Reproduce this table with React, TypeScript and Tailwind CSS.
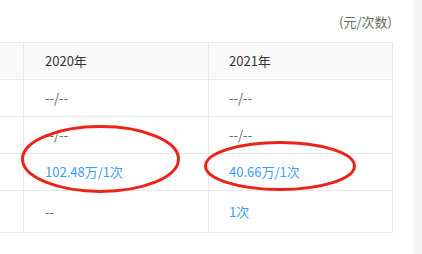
import React from "react";

const font = { fontFamily: '"Noto Sans CJK SC", "Noto Sans", sans-serif' };

export default function App() {
  const rows: { h: string; c: [string, string]; blue: [boolean, boolean] }[] = [
    { h: "h-[37px]", c: ["--/--", "--/--"], blue: [false, false] },
    { h: "h-[37px]", c: ["--/--", "--/--"], blue: [false, false] },
    { h: "h-[37px]", c: ["102.48万/1次", "40.66万/1次"], blue: [true, true] },
    { h: "h-[42px]", c: ["--", "1次"], blue: [false, true] },
  ];
  return (
    <div className="relative w-[422px] h-[254px] bg-white flex overflow-hidden text-[13px]" style={font}>
      <div className="w-[413px] h-full">
        <div className="h-[42px] pr-[21px] pt-[13px] text-right text-[#666] leading-[18px]">(元/次数)</div>
        <div className="w-[393px] border-t border-[#e8e8e8]">
          <div className="flex h-[37px] bg-[#fafafa] border-b border-[#e8e8e8]">
            <div className="w-[24px] border-r border-[#e8e8e8]" />
            <div className="w-[185px] border-r border-[#e8e8e8] pl-[21px] flex items-center text-[#333]">2020年</div>
            <div className="w-[184px] border-r border-[#e8e8e8] pl-[20px] flex items-center text-[#333]">2021年</div>
          </div>
          {rows.map((r, i) => (
            <div key={i} className={`flex ${r.h} border-b border-[#e8e8e8]`}>
              <div className="w-[24px] border-r border-[#e8e8e8]" />
              <div className={`w-[185px] border-r border-[#e8e8e8] pl-[21px] flex items-center ${r.blue[0] ? "text-[#3d9cfd]" : "text-[#666]"}`}>{r.c[0]}</div>
              <div className={`w-[184px] border-r border-[#e8e8e8] pl-[20px] flex items-center ${r.blue[1] ? "text-[#3d9cfd]" : "text-[#666]"}`}>{r.c[1]}</div>
            </div>
          ))}
        </div>
      </div>
      <div className="w-[9px] h-full bg-[#f5f5f5]" />
      <svg className="absolute inset-0 pointer-events-none" width="422" height="254">
        <ellipse cx="100.5" cy="159" rx="78" ry="32.5" fill="none" stroke="#ec2418" strokeWidth="3" />
        <ellipse cx="280" cy="166" rx="74.5" ry="23.5" fill="none" stroke="#ec2418" strokeWidth="3" />
      </svg>
    </div>
  );
}
